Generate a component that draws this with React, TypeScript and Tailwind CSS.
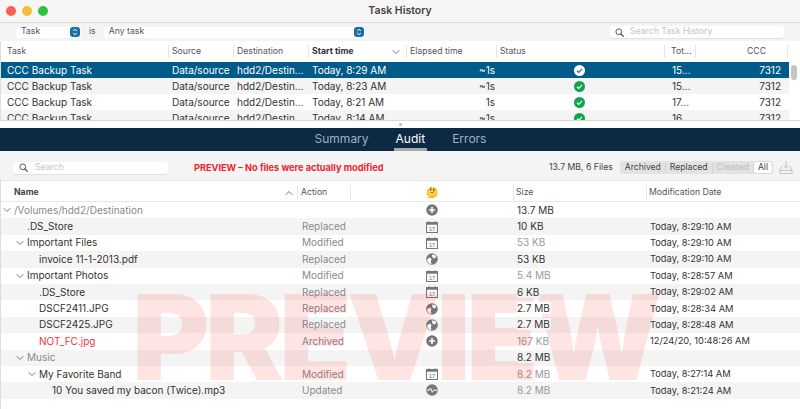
import React from "react";

const font = "font-['Inter','Liberation_Sans',sans-serif]";

function Caret({ className = "" }: { className?: string }) {
  return (
    <svg width="8" height="6" viewBox="0 0 8 6" className={className}>
      <path d="M1 1.5 4 4.5 7 1.5" fill="none" stroke="#777" strokeWidth="1" strokeLinecap="round" strokeLinejoin="round" />
    </svg>
  );
}

function SearchGlass({ color = "#555" }: { color?: string }) {
  return (
    <svg width="9" height="9" viewBox="0 0 10 10">
      <circle cx="4.2" cy="4.2" r="3.2" fill="none" stroke={color} strokeWidth="1.1" />
      <path d="M6.6 6.6 9.2 9.2" stroke={color} strokeWidth="1.4" strokeLinecap="round" />
    </svg>
  );
}

function Stepper() {
  return (
    <span className="flex h-[10px] w-[10px] items-center justify-center rounded-[3px] bg-[#1d6fa8]">
      <svg width="6" height="8" viewBox="0 0 6 8">
        <path d="M1.2 3 3 1.2 4.8 3M1.2 5 3 6.8 4.8 5" fill="none" stroke="#fff" strokeWidth="1" />
      </svg>
    </span>
  );
}

function Check({ selected }: { selected?: boolean }) {
  return (
    <svg width="11" height="11" viewBox="0 0 11 11">
      <circle cx="5.5" cy="5.5" r="5.5" fill={selected ? "#ffffff" : "#10a54f"} />
      <path d="M3 5.7 4.8 7.4 8 3.9" fill="none" stroke={selected ? "#1f6a9c" : "#ffffff"} strokeWidth="1.2" />
    </svg>
  );
}

function ActionIcon({ kind }: { kind: string }) {
  const c = "#77777a";
  if (kind === "plus")
    return (
      <svg width="12" height="12" viewBox="0 0 12 12">
        <circle cx="6" cy="6" r="5.8" fill={c} />
        <path d="M6 3v6M3 6h6" stroke="#fff" strokeWidth="1.6" />
      </svg>
    );
  if (kind === "cal")
    return (
      <svg width="12" height="12" viewBox="0 0 12 12">
        <rect x="0.5" y="1.5" width="11" height="10" fill="#f8f8f8" stroke={c} />
        <rect x="0.5" y="1.5" width="11" height="2.2" fill={c} />
        <path d="M3 .2v2.3M9 .2v2.3" stroke={c} strokeWidth="1" />
        <text x="6" y="10" textAnchor="middle" fontSize="5.6" fontFamily="Liberation Sans" fill={c}>17</text>
      </svg>
    );
  if (kind === "globe")
    return (
      <svg width="12" height="12" viewBox="0 0 12 12">
        <circle cx="6" cy="6" r="5.8" fill={c} />
        <path d="M1 6.8 3.4 4.4 5.6 6 4.8 8 5.4 10.9 3.2 10.4 1.6 8.6Z" fill="#fff" />
        <path d="M6.2 1.4 9.2 2 10.4 4.2 7.6 5.4 6 3.6Z" fill="#fff" />
      </svg>
    );
  if (kind === "pulse")
    return (
      <svg width="12" height="12" viewBox="0 0 12 12">
        <circle cx="6" cy="6" r="5.8" fill={c} />
        <path d="M.8 6.2h2.4l1.3-2.2 1.8 4.2 1.3-2h3.6" fill="none" stroke="#fff" strokeWidth="1" />
      </svg>
    );
  return null;
}

const tasks = [
  { t: "Today, 8:29 AM", e: "~1s", n: "15..." },
  { t: "Today, 8:23 AM", e: "~1s", n: "15..." },
  { t: "Today, 8:21 AM", e: "1s", n: "17..." },
  { t: "Today, 8:14 AM", e: "~1s", n: "16..." },
];

const taskGrid = "grid w-[788px] grid-cols-[165px_65px_75px_98px_90px_171px_31px_86px] pl-[6px]";

function HeadCell({ children, className = "mr-[3px]" }: { children?: React.ReactNode; className?: string }) {
  return <div className={`flex items-center border-r border-[#e6e6e6] ${className}`}>{children}</div>;
}

type Row = { name: string; indent: number; caret?: boolean; dim?: boolean; red?: boolean; action?: string; icon?: string; size: string; sizeDim?: boolean; date?: string };

const rows: Row[] = [
  { name: "/Volumes/hdd2/Destination", indent: 0, caret: true, dim: true, icon: "plus", size: "13.7 MB" },
  { name: ".DS_Store", indent: 1, action: "Replaced", icon: "cal", size: "10 KB", date: "Today, 8:29:10 AM" },
  { name: "Important Files", indent: 1, caret: true, action: "Modified", icon: "cal", size: "53 KB", sizeDim: true, date: "Today, 8:29:10 AM" },
  { name: "invoice 11-1-2013.pdf", indent: 2, action: "Replaced", icon: "globe", size: "53 KB", date: "Today, 8:29:10 AM" },
  { name: "Important Photos", indent: 1, caret: true, action: "Modified", icon: "cal", size: "5.4 MB", sizeDim: true, date: "Today, 8:28:57 AM" },
  { name: ".DS_Store", indent: 2, action: "Replaced", icon: "cal", size: "6 KB", date: "Today, 8:29:02 AM" },
  { name: "DSCF2411.JPG", indent: 2, action: "Replaced", icon: "globe", size: "2.7 MB", date: "Today, 8:28:34 AM" },
  { name: "DSCF2425.JPG", indent: 2, action: "Replaced", icon: "globe", size: "2.7 MB", date: "Today, 8:28:48 AM" },
  { name: "NOT_FC.jpg", indent: 2, red: true, action: "Archived", icon: "plus", size: "167 KB", sizeDim: true, date: "12/24/20, 10:48:26 AM" },
  { name: "Music", indent: 1, caret: true, dim: true, size: "8.2 MB" },
  { name: "My Favorite Band", indent: 2, caret: true, action: "Modified", icon: "cal", size: "8.2 MB", sizeDim: true, date: "Today, 8:27:14 AM" },
  { name: "10 You saved my bacon (Twice).mp3", indent: 3, action: "Updated", icon: "pulse", size: "8.2 MB", sizeDim: true, date: "Today, 8:21:24 AM" },
];

const auditGrid = "grid grid-cols-[297px_53px_163px_133px_153px]";

const namePad: Record<string, string> = {
  "0": "pl-[13px]",
  "1": "pl-[26px]",
  "2": "pl-[38px]",
  "3": "pl-[51px]",
  "0c": "pl-[2px]",
  "1c": "pl-[15px]",
  "2c": "pl-[27px]",
};

export default function App() {
  return (
    <div className={`${font} relative flex h-[409px] w-[800px] flex-col overflow-hidden bg-white text-[10px] text-[#333]`}>
      {/* Title bar */}
      <div className="relative flex h-[23px] shrink-0 items-center justify-center border-b border-[#dcdcdc] bg-[#f6f6f6]">
        <div className="absolute left-[6px] top-[6px] flex gap-[6px]">
          <span className="h-[10px] w-[10px] rounded-full bg-[#f4605a]" />
          <span className="h-[10px] w-[10px] rounded-full bg-[#f6bd3b]" />
          <span className="h-[10px] w-[10px] rounded-full bg-[#2ec440]" />
        </div>
        <span className="text-[10.5px] font-semibold text-[#444]">Task History</span>
      </div>

      {/* Filter bar */}
      <div className="flex h-[18px] shrink-0 items-center bg-[#f4f4f4] pl-[16px] pr-[16px] text-[8.7px]">
        <div className="flex h-[11px] w-[65px] items-center justify-between rounded-[3px] bg-white pl-[5px] pr-[1px] text-[#555]">
          <span>Task</span>
          <Stepper />
        </div>
        <span className="mx-[8px] text-[#555]">is</span>
        <div className="flex h-[11px] w-[261px] items-center justify-between rounded-[3px] bg-white pl-[5px] pr-[1px] text-[#555]">
          <span>Any task</span>
          <Stepper />
        </div>
        <div className="ml-auto flex h-[12px] w-[174px] items-center gap-[6px] rounded-[3px] bg-white pl-[5px] text-[#c4c4c4] shadow-[0_1px_1px_rgba(0,0,0,0.08)]">
          <SearchGlass />
          <span>Search Task History</span>
        </div>
      </div>

      {/* Task table */}
      <div className="relative h-[79px] shrink-0 overflow-hidden border-l border-[#ddd]">
        <div className={`${taskGrid} h-[21px] bg-white py-[4px] text-[8.7px] text-[#555]`}>
          <HeadCell>Task</HeadCell>
          <HeadCell>Source</HeadCell>
          <HeadCell>Destination</HeadCell>
          <HeadCell className="mr-[3px] justify-between pr-[6px] font-bold text-[#333]">Start time<Caret /></HeadCell>
          <HeadCell>Elapsed time</HeadCell>
          <HeadCell className="mr-[6px]">Status</HeadCell>
          <HeadCell className="mr-[6px]">Tot...</HeadCell>
          <HeadCell className="justify-end pr-[21px]">CCC</HeadCell>
        </div>
        {tasks.map((r, i) => (
          <div
            key={r.t}
            className={`${taskGrid} h-[16px] items-center ${i === 0 ? "bg-[#005b8a] text-white" : i % 2 ? "bg-[#f4f4f4]" : "bg-white"}`}
          >
            <div>CCC Backup Task</div>
            <div>Data/source</div>
            <div>hdd2/Destin...</div>
            <div>{r.t}</div>
            <div className="pr-[5px] text-right">{r.e}</div>
            <div className="flex justify-center pr-[12px]"><Check selected={i === 0} /></div>
            <div className="pl-[1px]">{r.n}</div>
            <div className="pr-[7px] text-right">7312</div>
          </div>
        ))}
        <span className="absolute left-[790px] top-[24px] h-[15px] w-[6px] rounded-full bg-[#c4c4c4]" />
      </div>

      {/* Split */}
      <div className="flex h-[8px] shrink-0 items-center justify-center border-t border-[#d8d8d8] bg-white">
        <span className="h-[3px] w-[3px] rounded-full bg-[#bbb]" />
      </div>

      {/* Tabs */}
      <div className="flex h-[23px] shrink-0 items-stretch justify-center gap-[25px] bg-[#0c2a44] pl-[1px] text-[12px] text-[#9fb0bf]">
        <div className="flex items-center pb-[2px]">Summary</div>
        <div className="flex items-center border-b-[3px] border-[#a7a9ab] px-[2px] pt-[1px] text-white">Audit</div>
        <div className="flex items-center pb-[2px]">Errors</div>
      </div>

      {/* Audit toolbar */}
      <div className="flex h-[29px] shrink-0 items-center bg-[#f4f4f4] pl-[13px] pr-[7px] pt-[4px] text-[8.7px]">
        <div className="flex h-[12px] w-[155px] items-center gap-[7px] rounded-[3px] bg-white pl-[6px] text-[#c4c4c4] shadow-[0_1px_1px_rgba(0,0,0,0.08)]">
          <SearchGlass />
          <span>Search</span>
        </div>
        <span className="ml-[26px] text-[9.2px] font-bold text-[#f0232d]">PREVIEW – No files were actually modified</span>
        <span className="ml-auto text-[#444]">13.7 MB, 6 Files</span>
        <div className="ml-[7px] flex h-[13px] items-center rounded-[3px] bg-[#e2e2e2] pl-[5px] text-[8.6px]">
          <span className="text-[#444]">Archived</span>
          <span className="mx-[4px] h-[9px] w-px bg-[#d2d2d2]" />
          <span className="text-[#444]">Replaced</span>
          <span className="mx-[4px] h-[9px] w-px bg-[#d2d2d2]" />
          <span className="text-[#bdbdbd]">Created</span>
          <span className="ml-[4px] flex h-[13px] items-center rounded-[3px] border border-[#d8d8d8] bg-white px-[4px] text-[#444]">All</span>
        </div>
        <svg width="14" height="15" viewBox="0 0 15 16" className="ml-[6px]">
          <path d="M7.5 1v7M5 6l2.5 2.5L10 6" fill="none" stroke="#bdbdbd" strokeWidth="1" />
          <path d="M3 6.5 1 11v3.5h13V11l-2-4.5M1 11h13" fill="none" stroke="#bdbdbd" strokeWidth="1" />
        </svg>
      </div>

      {/* Audit table */}
      <div className="relative flex-1 border-l border-[#ddd] bg-white">
        <div className={`${auditGrid} h-[22px] border-y border-[#e8e8e8] py-[4px] text-[8.7px] text-[#555]`}>
          <div className="flex items-center justify-between border-r border-[#e6e6e6] pl-[13px] pr-[4px] font-bold text-[#444]">
            Name
            <Caret className="rotate-180" />
          </div>
          <div className="flex items-center border-r border-[#e6e6e6] pl-[3px]">Action</div>
          <div className="flex items-center justify-center border-r border-[#e6e6e6] text-[10px]">🤔</div>
          <div className="flex items-center border-r border-[#e6e6e6] pl-[2px]">Size</div>
          <div className="flex items-center pl-[2px]">Modification Date</div>
        </div>
        {rows.map((r, i) => (
          <div key={i} className={`${auditGrid} h-[16.4px] items-center ${i % 2 ? "bg-[#f4f4f4]" : "bg-white"}`}>
            <div className={`flex items-center whitespace-nowrap ${r.red ? "text-[#f0323c]" : r.dim ? "text-[#8a8a8a]" : "text-[#333]"} ${namePad[`${r.indent}${r.caret ? "c" : ""}`]}`}>
              {r.caret ? <Caret className="mr-[3px]" /> : null}
              {r.name}
            </div>
            <div className="pl-[4px] text-[#8a8a8a]">{r.action}</div>
            <div className="flex justify-center pr-[1px]">{r.icon ? <ActionIcon kind={r.icon} /> : null}</div>
            <div className="pl-[3px]">
              {r.sizeDim ? (
                <span className="text-[#9a9a9a]">{r.size}</span>
              ) : (
                <span className={`relative z-10 pr-[1px] text-[#333] ${i % 2 ? "bg-[#f4f4f4]" : "bg-white"}`}>{r.size}</span>
              )}
            </div>
            <div className="whitespace-nowrap pl-[3px] text-[9.3px]">{r.date}</div>
          </div>
        ))}
        <div className="pointer-events-none absolute left-[131px] top-[98px] whitespace-nowrap text-[118px] font-black leading-[118px] tracking-[-4.5px] text-[#ff0000] opacity-[0.1]">
          PREVIEW
        </div>
      </div>
    </div>
  );
}
